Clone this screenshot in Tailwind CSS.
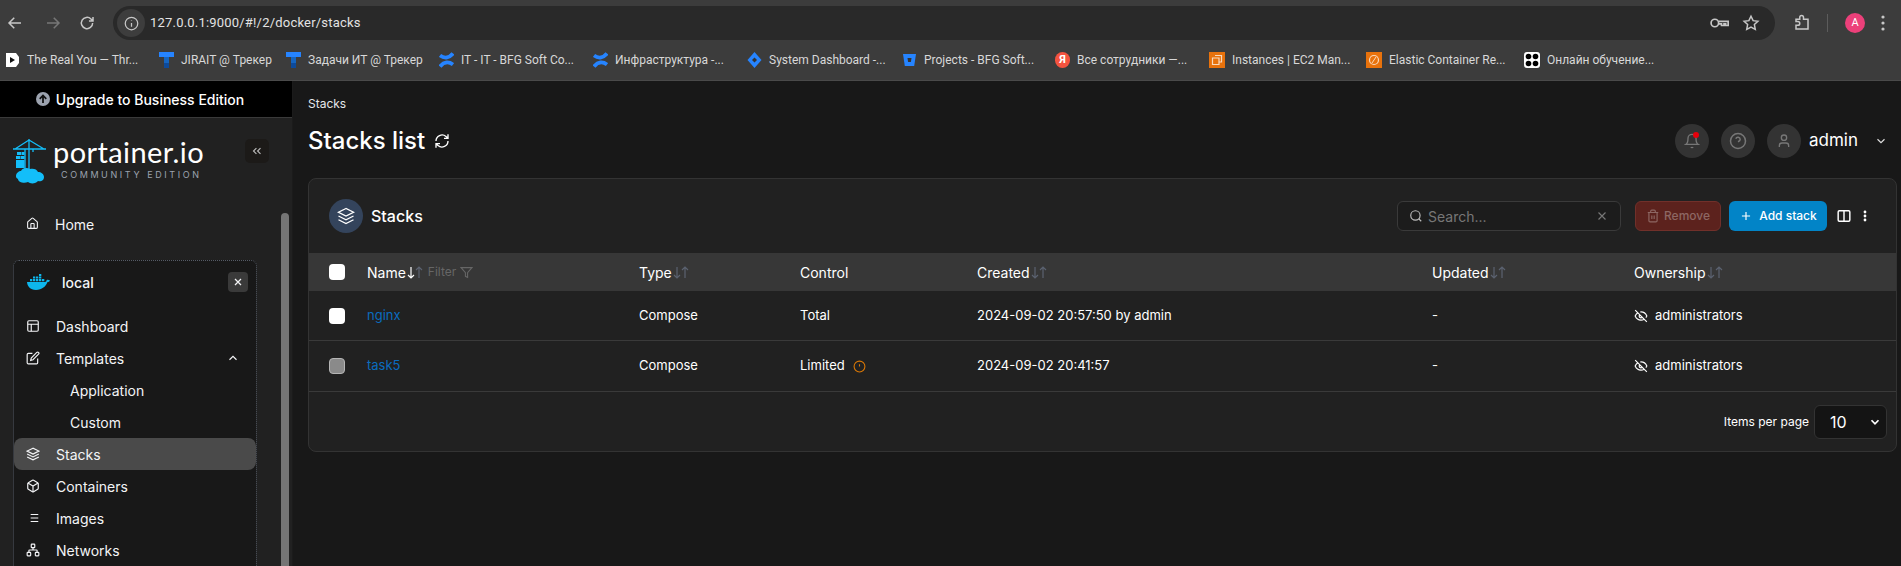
<!DOCTYPE html>
<html lang="en">
<head>
  <meta charset="UTF-8">
  <title>Stacks list</title>
  <script src="https://cdn.jsdelivr.net/npm/@tailwindcss/browser@4"></script>
</head>
<body class="w-[1901px] h-[566px] overflow-hidden bg-[#181818] text-white font-['Inter',sans-serif]">

  <!-- browser chrome -->
  <div class="h-[81px] bg-[#3c3c3c] border-b border-[#4a4a4a] pt-[6px] font-['Roboto',sans-serif]">
    <div class="h-[34px] flex items-center text-[#c7c7c7]">
      <div class="w-[113px] flex items-center pl-[6px] shrink-0">
        <svg class="w-[18px] h-[18px]" viewBox="0 0 24 24" fill="none" stroke="currentColor" stroke-width="2"><path d="M20 12H5M11 5l-7 7 7 7"/></svg>
        <svg class="ml-[20px] w-[18px] h-[18px] text-[#777]" viewBox="0 0 24 24" fill="none" stroke="currentColor" stroke-width="2"><path d="M4 12h15M13 5l7 7-7 7"/></svg>
        <svg class="ml-[16px] w-[18px] h-[18px]" viewBox="0 0 24 24" fill="none" stroke="currentColor" stroke-width="2"><path d="M19.500 12a7.500 7.500 0 1 1-2.200-5.300L20 9.400M20 4v5.400h-5.400"/></svg>
      </div>
      <div class="w-[1662px] h-[34px] rounded-full bg-[#292929] flex items-center pl-[4px] pr-[15px]">
        <div class="w-[28px] h-[28px] rounded-full bg-[#3d3d3d] flex items-center justify-center">
          <svg class="w-[15px] h-[15px]" viewBox="0 0 24 24" fill="none" stroke="currentColor" stroke-width="2"><circle cx="12" cy="12" r="10"/><path d="M12 11v6M12 7v1"/></svg>
        </div>
        <span class="ml-[5px] text-[13px] text-[#e3e3e3] tracking-[0.2px]">127.0.0.1:9000/#!/2/docker/stacks</span>
        <svg class="ml-auto w-[20px] h-[20px]" viewBox="0 0 24 24" fill="none" stroke="currentColor" stroke-width="2"><circle cx="7" cy="12" r="4.500"/><path d="M11.500 10H23v5h-3v-2h-2v2h-3v-2h-3.500"/></svg>
        <svg class="ml-[13px] w-[18px] h-[18px]" viewBox="0 0 24 24" fill="none" stroke="currentColor" stroke-width="2"><path d="M12 3l2.800 5.900 6.400.8-4.700 4.400 1.200 6.400-5.700-3.100-5.700 3.100 1.200-6.400-4.700-4.400 6.400-.8z"/></svg>
      </div>
      <svg class="ml-[18px] w-[18px] h-[18px]" viewBox="0 0 24 24" fill="none" stroke="currentColor" stroke-width="2"><path d="M4 7h5V4.500a2.500 2.500 0 0 1 5 0V7h6v13H4v-5h2.500a2.500 2.500 0 0 0 0-5H4z"/></svg>
      <div class="ml-[16px] w-px h-[18px] bg-[#5c5c5c]"></div>
      <div class="ml-[17px] w-[20px] h-[20px] rounded-full bg-[#ec407a] text-white text-[11px] flex items-center justify-center">A</div>
      <svg class="ml-[16px] w-[4px] h-[16px]" viewBox="0 0 4 16" fill="currentColor"><circle cx="2" cy="2" r="1.600"/><circle cx="2" cy="8" r="1.600"/><circle cx="2" cy="14" r="1.600"/></svg>
    </div>
    <div class="h-[40px] flex items-center pl-[5px] text-[12px] text-[#d8d8d8]">
      <div class="w-[154px] flex items-center gap-[7px]">
        <svg class="w-[15px] h-[16px]" viewBox="0 0 15 16"><path d="M1 1h10l3 4v6l-3 4H1z" fill="#fff"/><path d="M5 5l5 3-5 3z" fill="#111"/></svg>
        <span>The Real You — Thr...</span>
      </div>
      <div class="w-[127px] flex items-center gap-[7px]">
        <svg class="w-[15px] h-[16px]" viewBox="0 0 15 16"><path d="M0 0h15v5H0z" fill="#2684ff"/><path d="M5 5h5v6H5z" fill="#1565c0"/><path d="M5 11h5v5H5z" fill="#0d4a9a"/></svg>
        <span>JIRAIT @ Трекер</span>
      </div>
      <div class="w-[153px] flex items-center gap-[7px]">
        <svg class="w-[15px] h-[16px]" viewBox="0 0 15 16"><path d="M0 0h15v5H0z" fill="#2684ff"/><path d="M5 5h5v6H5z" fill="#1565c0"/><path d="M5 11h5v5H5z" fill="#0d4a9a"/></svg>
        <span>Задачи ИТ @ Трекер</span>
      </div>
      <div class="w-[154px] flex items-center gap-[7px]">
        <svg class="w-[15px] h-[16px]" viewBox="0 0 15 16" fill="none" stroke="#2684ff" stroke-width="3.800"><path d="M1 14.500c4-5 9-5 13-2M14 1.500C10 6.500 5 6.500 1 3.500"/></svg>
        <span>IT - IT - BFG Soft Co...</span>
      </div>
      <div class="w-[154px] flex items-center gap-[7px]">
        <svg class="w-[15px] h-[16px]" viewBox="0 0 15 16" fill="none" stroke="#2684ff" stroke-width="3.800"><path d="M1 14.500c4-5 9-5 13-2M14 1.500C10 6.500 5 6.500 1 3.500"/></svg>
        <span>Инфраструктура -...</span>
      </div>
      <div class="w-[155px] flex items-center gap-[7px]">
        <svg class="w-[15px] h-[16px]" viewBox="0 0 15 16"><path d="M7.500 0l7 8-7 8-7-8z" fill="#2684ff"/><path d="M7.500 5.500l2.500 2.500-2.500 2.500L5 8z" fill="#333"/></svg>
        <span>System Dashboard -...</span>
      </div>
      <div class="w-[153px] flex items-center gap-[7px]">
        <svg class="w-[15px] h-[16px]" viewBox="0 0 15 16"><path d="M1 2h13l-1.800 12H2.800z" fill="#2684ff"/><path d="M5.500 6h4l-.6 4H6.100z" fill="#333"/></svg>
        <span>Projects - BFG Soft...</span>
      </div>
      <div class="w-[154px] flex items-center gap-[7px]">
        <div class="w-[15px] h-[16px] rounded-full bg-[#f4533f] text-white text-[11px] font-bold flex items-center justify-center">Я</div>
        <span>Все сотрудники —...</span>
      </div>
      <div class="w-[157px] flex items-center gap-[7px]">
        <svg class="w-[16px] h-[16px]" viewBox="0 0 16 16"><path d="M0 0h16v16H0z" fill="#e8720c"/><path d="M6 3.500h6.500V10H10M3.500 6H10v6.500H3.500z" fill="none" stroke="#f8d9bd" stroke-width="1.200"/></svg>
        <span>Instances | EC2 Man...</span>
      </div>
      <div class="w-[158px] flex items-center gap-[7px]">
        <svg class="w-[16px] h-[16px]" viewBox="0 0 16 16"><path d="M0 0h16v16H0z" fill="#e8720c"/><circle cx="8" cy="8" r="4.500" fill="none" stroke="#f8d9bd" stroke-width="1.200"/><path d="M6 11l4-6" stroke="#f8d9bd"/></svg>
        <span>Elastic Container Re...</span>
      </div>
      <div class="flex items-center gap-[7px]">
        <svg class="w-[16px] h-[16px]" viewBox="0 0 16 16"><rect width="16" height="16" rx="3" fill="#fff"/><circle cx="4.500" cy="4.500" r="2.800" fill="#000"/><circle cx="11.500" cy="4.500" r="2.800" fill="#000"/><circle cx="4.500" cy="11.500" r="2.800" fill="#000"/><circle cx="11.500" cy="11.500" r="2.800" fill="#000"/></svg>
        <span>Онлайн обучение...</span>
      </div>
    </div>
  </div>

  <div class="flex h-[485px]">
    <!-- sidebar -->
    <aside class="w-[293px] shrink-0 bg-[#212121] border-r border-[#1b1b1b] overflow-hidden">
      <div class="h-[37px] bg-black border-b border-[#3a3a3a] flex items-center justify-center gap-[6px] pr-[12px] text-[14px] font-medium">
        <svg class="w-[14px] h-[14px]" viewBox="0 0 12 12"><circle cx="6" cy="6" r="6" fill="#9ca3af"/><path d="M6 9.500V3M3.200 5.800 6 3l2.800 2.800" fill="none" stroke="#111" stroke-width="1.500"/></svg>
        Upgrade to Business Edition
      </div>
      <div class="relative h-[448px]">
        <div class="h-[86px] pt-[21px] pl-[13px] flex items-start">
          <svg class="w-[33px] h-[45px] shrink-0" viewBox="0 0 33 45">
            <g fill="none" stroke="#13bef9" stroke-width="1.300"><path d="M0 10h33M16 0v31M16 1 2 10M16 1l15 9M12 10v20M20 10v3"/></g>
            <path d="M4 13h4v3H4zM8.500 13h3v3h-3zM3 17h4v3H3zM7.500 17h4v3h-4zM3 21h8.500v8H3z" fill="#13bef9"/>
            <path d="M3 37c0-3 3-5 5-5 1-3 6-4 9-2 3-1 7 0 8 3 3 0 6 2 6 5 0 4-4 5-6 4-2 3-8 3-10 1-4 2-10 0-10-3-2-1-2-2-2-3z" fill="#13bef9"/>
          </svg>
          <div class="ml-[7px] -mt-[2px]">
            <div class="text-[29px] leading-[30px] font-['Lato',sans-serif] tracking-[0.4px]">portainer.io</div>
            <div class="ml-[8px] mt-[3px] text-[9px] leading-[9px] tracking-[2.600px] text-[#9ca3af] whitespace-nowrap">COMMUNITY EDITION</div>
          </div>
          <button class="absolute left-[245px] top-[21px] w-[24px] h-[24px] rounded-[5px] bg-[#1c1a18] flex items-center justify-center text-[#bbb]">
            <svg class="w-[14px] h-[14px]" viewBox="0 0 24 24" fill="none" stroke="currentColor" stroke-width="2"><path d="m11 17-5-5 5-5M18 17l-5-5 5-5"/></svg>
          </button>
        </div>
        <div class="h-[56px] flex items-start pl-[26px] pt-[10px] gap-[16px] text-[14px] text-[#f3f4f6]">
          <svg class="w-[13px] h-[13px] mt-[3px]" viewBox="0 0 24 24" fill="none" stroke="currentColor" stroke-width="2"><path d="M15 21v-8a1 1 0 0 0-1-1h-4a1 1 0 0 0-1 1v8"/><path d="M3 10a2 2 0 0 1 .709-1.528l7-5.999a2 2 0 0 1 2.582 0l7 5.999A2 2 0 0 1 21 10v9a2 2 0 0 1-2 2H5a2 2 0 0 1-2-2z"/></svg>
          Home
        </div>
        <div class="ml-[13px] w-[244px] h-[322px] bg-[#181818] border border-dotted border-[#555b66] rounded-[6px] text-[14px] text-[#f3f4f6] pt-[11px]">
          <div class="h-[20px] flex items-center pl-[13px] font-medium">
            <svg class="w-[23px] h-[16px]" viewBox="0 0 23 16" fill="#0db7ed"><path d="M0 8h18c1 0 1.500-1 1.700-2 1-.5 2.300-.3 3.300.6-.6 1-1.500 1.500-2.500 1.500C19 12.500 15 16 9 16 3 16 .3 12 0 8z"/><path d="M3 5h2.300v2.300H3zM6 5h2.300v2.300H6zM9 5h2.300v2.300H9zM12 5h2.300v2.300H12zM6 2.500h2.300v2H6zM9 2.500h2.300v2H9zM12 2.500h2.300v2H12zM12 0h2.300v2H12zM15 5h2.300v2.300H15z"/></svg>
            <span class="ml-[12px]">local</span>
            <div class="ml-auto mr-[8px] w-[20px] h-[20px] rounded-[4px] bg-[#3a3a3a] flex items-center justify-center">
              <svg class="w-[12px] h-[12px]" viewBox="0 0 24 24" fill="none" stroke="currentColor" stroke-width="2.500"><path d="M18 6 6 18M6 6l12 12"/></svg>
            </div>
          </div>
          <div class="mt-[18px] flex flex-col">
            <div class="h-[32px] flex items-center pl-[12px] gap-[16px]">
              <svg class="w-[14px] h-[14px]" viewBox="0 0 24 24" fill="none" stroke="currentColor" stroke-width="2"><rect x="3" y="3" width="18" height="18" rx="2"/><path d="M3 9h18M9 21V9"/></svg>
              Dashboard
            </div>
            <div class="h-[32px] flex items-center pl-[12px] gap-[16px]">
              <svg class="w-[14px] h-[14px]" viewBox="0 0 24 24" fill="none" stroke="currentColor" stroke-width="2"><path d="M11 4H4a2 2 0 0 0-2 2v14a2 2 0 0 0 2 2h14a2 2 0 0 0 2-2v-7"/><path d="M18.500 2.500a2.121 2.121 0 0 1 3 3L12 15l-4 1 1-4 9.500-9.500z"/></svg>
              Templates
              <svg class="ml-auto mr-[16px] w-[14px] h-[14px]" viewBox="0 0 24 24" fill="none" stroke="currentColor" stroke-width="2"><path d="m18 15-6-6-6 6"/></svg>
            </div>
            <div class="h-[32px] flex items-center pl-[56px]">Application</div>
            <div class="h-[32px] flex items-center pl-[56px]">Custom</div>
            <div class="h-[32px] flex items-center pl-[12px] gap-[16px] bg-[#4a4a4a] rounded-[8px]">
              <svg class="w-[14px] h-[14px]" viewBox="0 0 24 24" fill="none" stroke="currentColor" stroke-width="2"><path d="M12 2 2 7l10 5 10-5-10-5z"/><path d="m2 17 10 5 10-5M2 12l10 5 10-5"/></svg>
              Stacks
            </div>
            <div class="h-[32px] flex items-center pl-[12px] gap-[16px]">
              <svg class="w-[14px] h-[14px]" viewBox="0 0 24 24" fill="none" stroke="currentColor" stroke-width="2"><path d="M21 16V8a2 2 0 0 0-1-1.730l-7-4a2 2 0 0 0-2 0l-7 4A2 2 0 0 0 3 8v8a2 2 0 0 0 1 1.730l7 4a2 2 0 0 0 2 0l7-4A2 2 0 0 0 21 16z"/><path d="M3.270 6.960 12 12.010l8.730-5.050M12 22.080V12"/></svg>
              Containers
            </div>
            <div class="h-[32px] flex items-center pl-[12px] gap-[16px]">
              <svg class="w-[14px] h-[14px]" viewBox="0 0 24 24" fill="none" stroke="currentColor" stroke-width="2"><path d="M8 6h13M8 12h13M8 18h13M3 6h.01M3 12h.01M3 18h.01"/></svg>
              Images
            </div>
            <div class="h-[32px] flex items-center pl-[12px] gap-[16px]">
              <svg class="w-[14px] h-[14px]" viewBox="0 0 24 24" fill="none" stroke="currentColor" stroke-width="2"><rect x="9" y="2" width="6" height="6" rx="1"/><rect x="16" y="16" width="6" height="6" rx="1"/><rect x="2" y="16" width="6" height="6" rx="1"/><path d="M5 16v-3a1 1 0 0 1 1-1h12a1 1 0 0 1 1 1v3M12 12V8"/></svg>
              Networks
            </div>
          </div>
        </div>
        <div class="absolute left-[281px] top-[95px] w-[8px] h-[400px] rounded-full bg-[#757575]"></div>
      </div>
    </aside>

    <!-- main -->
    <main class="flex-1 pl-[15px] pr-[4px]">
      <div class="pt-[16px] text-[12px] leading-[14px] text-[#e5e7eb]">Stacks</div>
      <div class="mt-[13px] h-[34px] flex items-center">
        <h1 class="text-[24px] font-medium leading-[34px]">Stacks list</h1>
        <svg class="ml-[9px] w-[16px] h-[16px]" viewBox="0 0 24 24" fill="none" stroke="currentColor" stroke-width="2"><path d="M21 2v6h-6M3 12a9 9 0 0 1 15-6.700L21 8M3 22v-6h6M21 12a9 9 0 0 1-15 6.700L3 16"/></svg>
        <div class="ml-auto flex items-center text-[#777]">
          <div class="relative w-[34px] h-[34px] rounded-full bg-[#333] flex items-center justify-center">
            <svg class="w-[16px] h-[16px]" viewBox="0 0 24 24" fill="none" stroke="currentColor" stroke-width="2"><path d="M18 8a6 6 0 0 0-12 0c0 7-3 9-3 9h18s-3-2-3-9M13.700 21a2 2 0 0 1-3.400 0"/></svg>
            <span class="absolute left-[18px] top-[8px] w-[6px] h-[6px] rounded-full bg-red-600"></span>
          </div>
          <div class="ml-[12px] w-[34px] h-[34px] rounded-full bg-[#333] flex items-center justify-center">
            <svg class="w-[18px] h-[18px]" viewBox="0 0 24 24" fill="none" stroke="currentColor" stroke-width="2"><circle cx="12" cy="12" r="10"/><path d="M9.090 9a3 3 0 0 1 5.830 1c0 2-3 3-3 3M12 17h.01"/></svg>
          </div>
          <div class="ml-[12px] w-[34px] h-[34px] rounded-full bg-[#333] flex items-center justify-center">
            <svg class="w-[16px] h-[16px]" viewBox="0 0 24 24" fill="none" stroke="currentColor" stroke-width="2"><path d="M19 21v-2a4 4 0 0 0-4-4H9a4 4 0 0 0-4 4v2"/><circle cx="12" cy="7" r="4"/></svg>
          </div>
          <span class="ml-[8px] text-[17px] text-white">admin</span>
          <svg class="ml-[16px] mr-[9px] w-[14px] h-[14px] text-[#ddd]" viewBox="0 0 24 24" fill="none" stroke="currentColor" stroke-width="2"><path d="m6 9 6 6 6-6"/></svg>
        </div>
      </div>

      <!-- card -->
      <section class="mt-[20px] h-[274px] rounded-[8px] bg-[#212121] border border-[#333] text-[14px] overflow-hidden">
        <div class="h-[74px] flex items-center pl-[20px]">
          <div class="w-[34px] h-[34px] rounded-full bg-[#34445c] flex items-center justify-center">
            <svg class="w-[18px] h-[18px]" viewBox="0 0 24 24" fill="none" stroke="currentColor" stroke-width="1.800"><path d="M12 2 2 7l10 5 10-5-10-5z"/><path d="m2 17 10 5 10-5M2 12l10 5 10-5"/></svg>
          </div>
          <span class="ml-[8px] text-[16px] font-medium">Stacks</span>
          <div class="ml-auto w-[224px] h-[30px] rounded-[6px] border border-[#3a3a3a] bg-[#1c1c1c] flex items-center pl-[11px] pr-[11px] text-[#777]">
            <svg class="w-[14px] h-[14px] text-[#bbb]" viewBox="0 0 24 24" fill="none" stroke="currentColor" stroke-width="2"><circle cx="11" cy="11" r="8"/><path d="m21 21-4.300-4.300"/></svg>
            <span class="ml-[5px]">Search...</span>
            <svg class="ml-auto w-[14px] h-[14px]" viewBox="0 0 24 24" fill="none" stroke="currentColor" stroke-width="2"><path d="M18 6 6 18M6 6l12 12"/></svg>
          </div>
          <button class="ml-[14px] w-[86px] h-[30px] rounded-[6px] bg-[#5c221d] border border-[#71302a] text-[#8d6763] text-[12px] font-medium flex items-center justify-center gap-[4px]">
            <svg class="w-[14px] h-[14px]" viewBox="0 0 24 24" fill="none" stroke="currentColor" stroke-width="2"><path d="M3 6h18M19 6v14a2 2 0 0 1-2 2H7a2 2 0 0 1-2-2V6m3 0V4a2 2 0 0 1 2-2h4a2 2 0 0 1 2 2v2M10 11v6M14 11v6"/></svg>
            Remove
          </button>
          <button class="ml-[8px] w-[98px] h-[30px] rounded-[6px] bg-[#0284c7] text-white text-[12px] font-medium flex items-center justify-center gap-[6px]">
            <svg class="w-[14px] h-[14px]" viewBox="0 0 24 24" fill="none" stroke="currentColor" stroke-width="2"><path d="M12 5v14M5 12h14"/></svg>
            Add stack
          </button>
          <svg class="ml-[10px] w-[14px] h-[14px]" viewBox="0 0 24 24" fill="none" stroke="currentColor" stroke-width="2.500"><rect x="2" y="3" width="20" height="18" rx="2"/><path d="M12 3v18"/></svg>
          <svg class="ml-[12px] mr-[29px] w-[4px] h-[12px]" viewBox="0 0 4 12" fill="currentColor"><circle cx="2" cy="2" r="1.400"/><circle cx="2" cy="6" r="1.400"/><circle cx="2" cy="10" r="1.400"/></svg>
        </div>

        <div class="grid grid-cols-[58px_272px_161px_177px_455px_202px_1fr] items-center h-[38px] bg-[#373737] text-[14px]">
          <div class="pl-[20px]"><div class="w-[16px] h-[16px] rounded-[4px] bg-white"></div></div>
          <div class="flex items-center">Name
            <svg class="ml-[1px] w-[8px] h-[13px] text-white" viewBox="0 0 8 13" fill="none" stroke="currentColor" stroke-width="1.200"><path d="M4 1v11M1 9l3 3 3-3"/></svg>
            <svg class="w-[8px] h-[13px] text-[#5b6270]" viewBox="0 0 8 13" fill="none" stroke="currentColor" stroke-width="1.200"><path d="M4 12V1M1 4l3-3 3 3"/></svg>
            <span class="ml-[5px] text-[#666] text-[12px]">Filter</span>
            <svg class="ml-[4px] w-[13px] h-[13px] text-[#666]" viewBox="0 0 24 24" fill="none" stroke="currentColor" stroke-width="2"><path d="M22 3H2l8 9.460V19l4 2v-8.540L22 3z"/></svg>
          </div>
          <div class="flex items-center">Type
            <svg class="ml-[1px] w-[8px] h-[13px] text-[#5b6270]" viewBox="0 0 8 13" fill="none" stroke="currentColor" stroke-width="1.200"><path d="M4 1v11M1 9l3 3 3-3"/></svg>
            <svg class="w-[8px] h-[13px] text-[#5b6270]" viewBox="0 0 8 13" fill="none" stroke="currentColor" stroke-width="1.200"><path d="M4 12V1M1 4l3-3 3 3"/></svg>
          </div>
          <div>Control</div>
          <div class="flex items-center">Created
            <svg class="ml-[1px] w-[8px] h-[13px] text-[#5b6270]" viewBox="0 0 8 13" fill="none" stroke="currentColor" stroke-width="1.200"><path d="M4 1v11M1 9l3 3 3-3"/></svg>
            <svg class="w-[8px] h-[13px] text-[#5b6270]" viewBox="0 0 8 13" fill="none" stroke="currentColor" stroke-width="1.200"><path d="M4 12V1M1 4l3-3 3 3"/></svg>
          </div>
          <div class="flex items-center">Updated
            <svg class="ml-[1px] w-[8px] h-[13px] text-[#5b6270]" viewBox="0 0 8 13" fill="none" stroke="currentColor" stroke-width="1.200"><path d="M4 1v11M1 9l3 3 3-3"/></svg>
            <svg class="w-[8px] h-[13px] text-[#5b6270]" viewBox="0 0 8 13" fill="none" stroke="currentColor" stroke-width="1.200"><path d="M4 12V1M1 4l3-3 3 3"/></svg>
          </div>
          <div class="flex items-center">Ownership
            <svg class="ml-[1px] w-[8px] h-[13px] text-[#5b6270]" viewBox="0 0 8 13" fill="none" stroke="currentColor" stroke-width="1.200"><path d="M4 1v11M1 9l3 3 3-3"/></svg>
            <svg class="w-[8px] h-[13px] text-[#5b6270]" viewBox="0 0 8 13" fill="none" stroke="currentColor" stroke-width="1.200"><path d="M4 12V1M1 4l3-3 3 3"/></svg>
          </div>
        </div>

        <div class="grid grid-cols-[58px_272px_161px_177px_455px_202px_1fr] items-center h-[50px] border-b border-[#3a3a3a] text-[13px]">
          <div class="pl-[20px]"><div class="w-[16px] h-[16px] rounded-[4px] bg-white"></div></div>
          <div class="text-[#0a6cbf]">nginx</div>
          <div>Compose</div>
          <div>Total</div>
          <div>2024-09-02 20:57:50 by admin</div>
          <div>-</div>
          <div class="flex items-center gap-[7px]">
            <svg class="w-[14px] h-[14px]" viewBox="0 0 24 24" fill="none" stroke="currentColor" stroke-width="2"><path d="M9.880 9.880a3 3 0 1 0 4.240 4.240M10.730 5.080A10.430 10.430 0 0 1 12 5c7 0 10 7 10 7a13.160 13.160 0 0 1-1.670 2.680M6.610 6.610A13.526 13.526 0 0 0 2 12s3 7 10 7a9.740 9.740 0 0 0 5.390-1.610M2 2l20 20"/></svg>
            administrators
          </div>
        </div>
        <div class="grid grid-cols-[58px_272px_161px_177px_455px_202px_1fr] items-center h-[51px] border-b border-[#3a3a3a] text-[13px]">
          <div class="pl-[20px]"><div class="w-[16px] h-[16px] rounded-[4px] bg-[#8a8a8a] border border-[#b5b5b5]"></div></div>
          <div class="text-[#0a6cbf]">task5</div>
          <div>Compose</div>
          <div class="flex items-center gap-[8px]">Limited
            <svg class="w-[13px] h-[13px] text-[#d97706]" viewBox="0 0 24 24" fill="none" stroke="currentColor" stroke-width="2"><circle cx="12" cy="12" r="10"/><path d="M12 8v4M12 16h.01"/></svg>
          </div>
          <div>2024-09-02 20:41:57</div>
          <div>-</div>
          <div class="flex items-center gap-[7px]">
            <svg class="w-[14px] h-[14px]" viewBox="0 0 24 24" fill="none" stroke="currentColor" stroke-width="2"><path d="M9.880 9.880a3 3 0 1 0 4.240 4.240M10.730 5.080A10.430 10.430 0 0 1 12 5c7 0 10 7 10 7a13.160 13.160 0 0 1-1.670 2.680M6.610 6.610A13.526 13.526 0 0 0 2 12s3 7 10 7a9.740 9.740 0 0 0 5.390-1.610M2 2l20 20"/></svg>
            administrators
          </div>
        </div>

        <div class="h-[60px] flex items-center justify-end pr-[9px] text-[12px]">
          <span class="mr-[5px]">Items per page</span>
          <div class="w-[73px] h-[34px] rounded-[6px] bg-[#141414] border border-[#333] flex items-center pl-[15px] pr-[4px] text-[16px]">
            10
            <svg class="ml-auto w-[14px] h-[14px]" viewBox="0 0 24 24" fill="none" stroke="currentColor" stroke-width="3"><path d="m6 9 6 6 6-6"/></svg>
          </div>
        </div>
      </section>
    </main>
  </div>
</body>
</html>
